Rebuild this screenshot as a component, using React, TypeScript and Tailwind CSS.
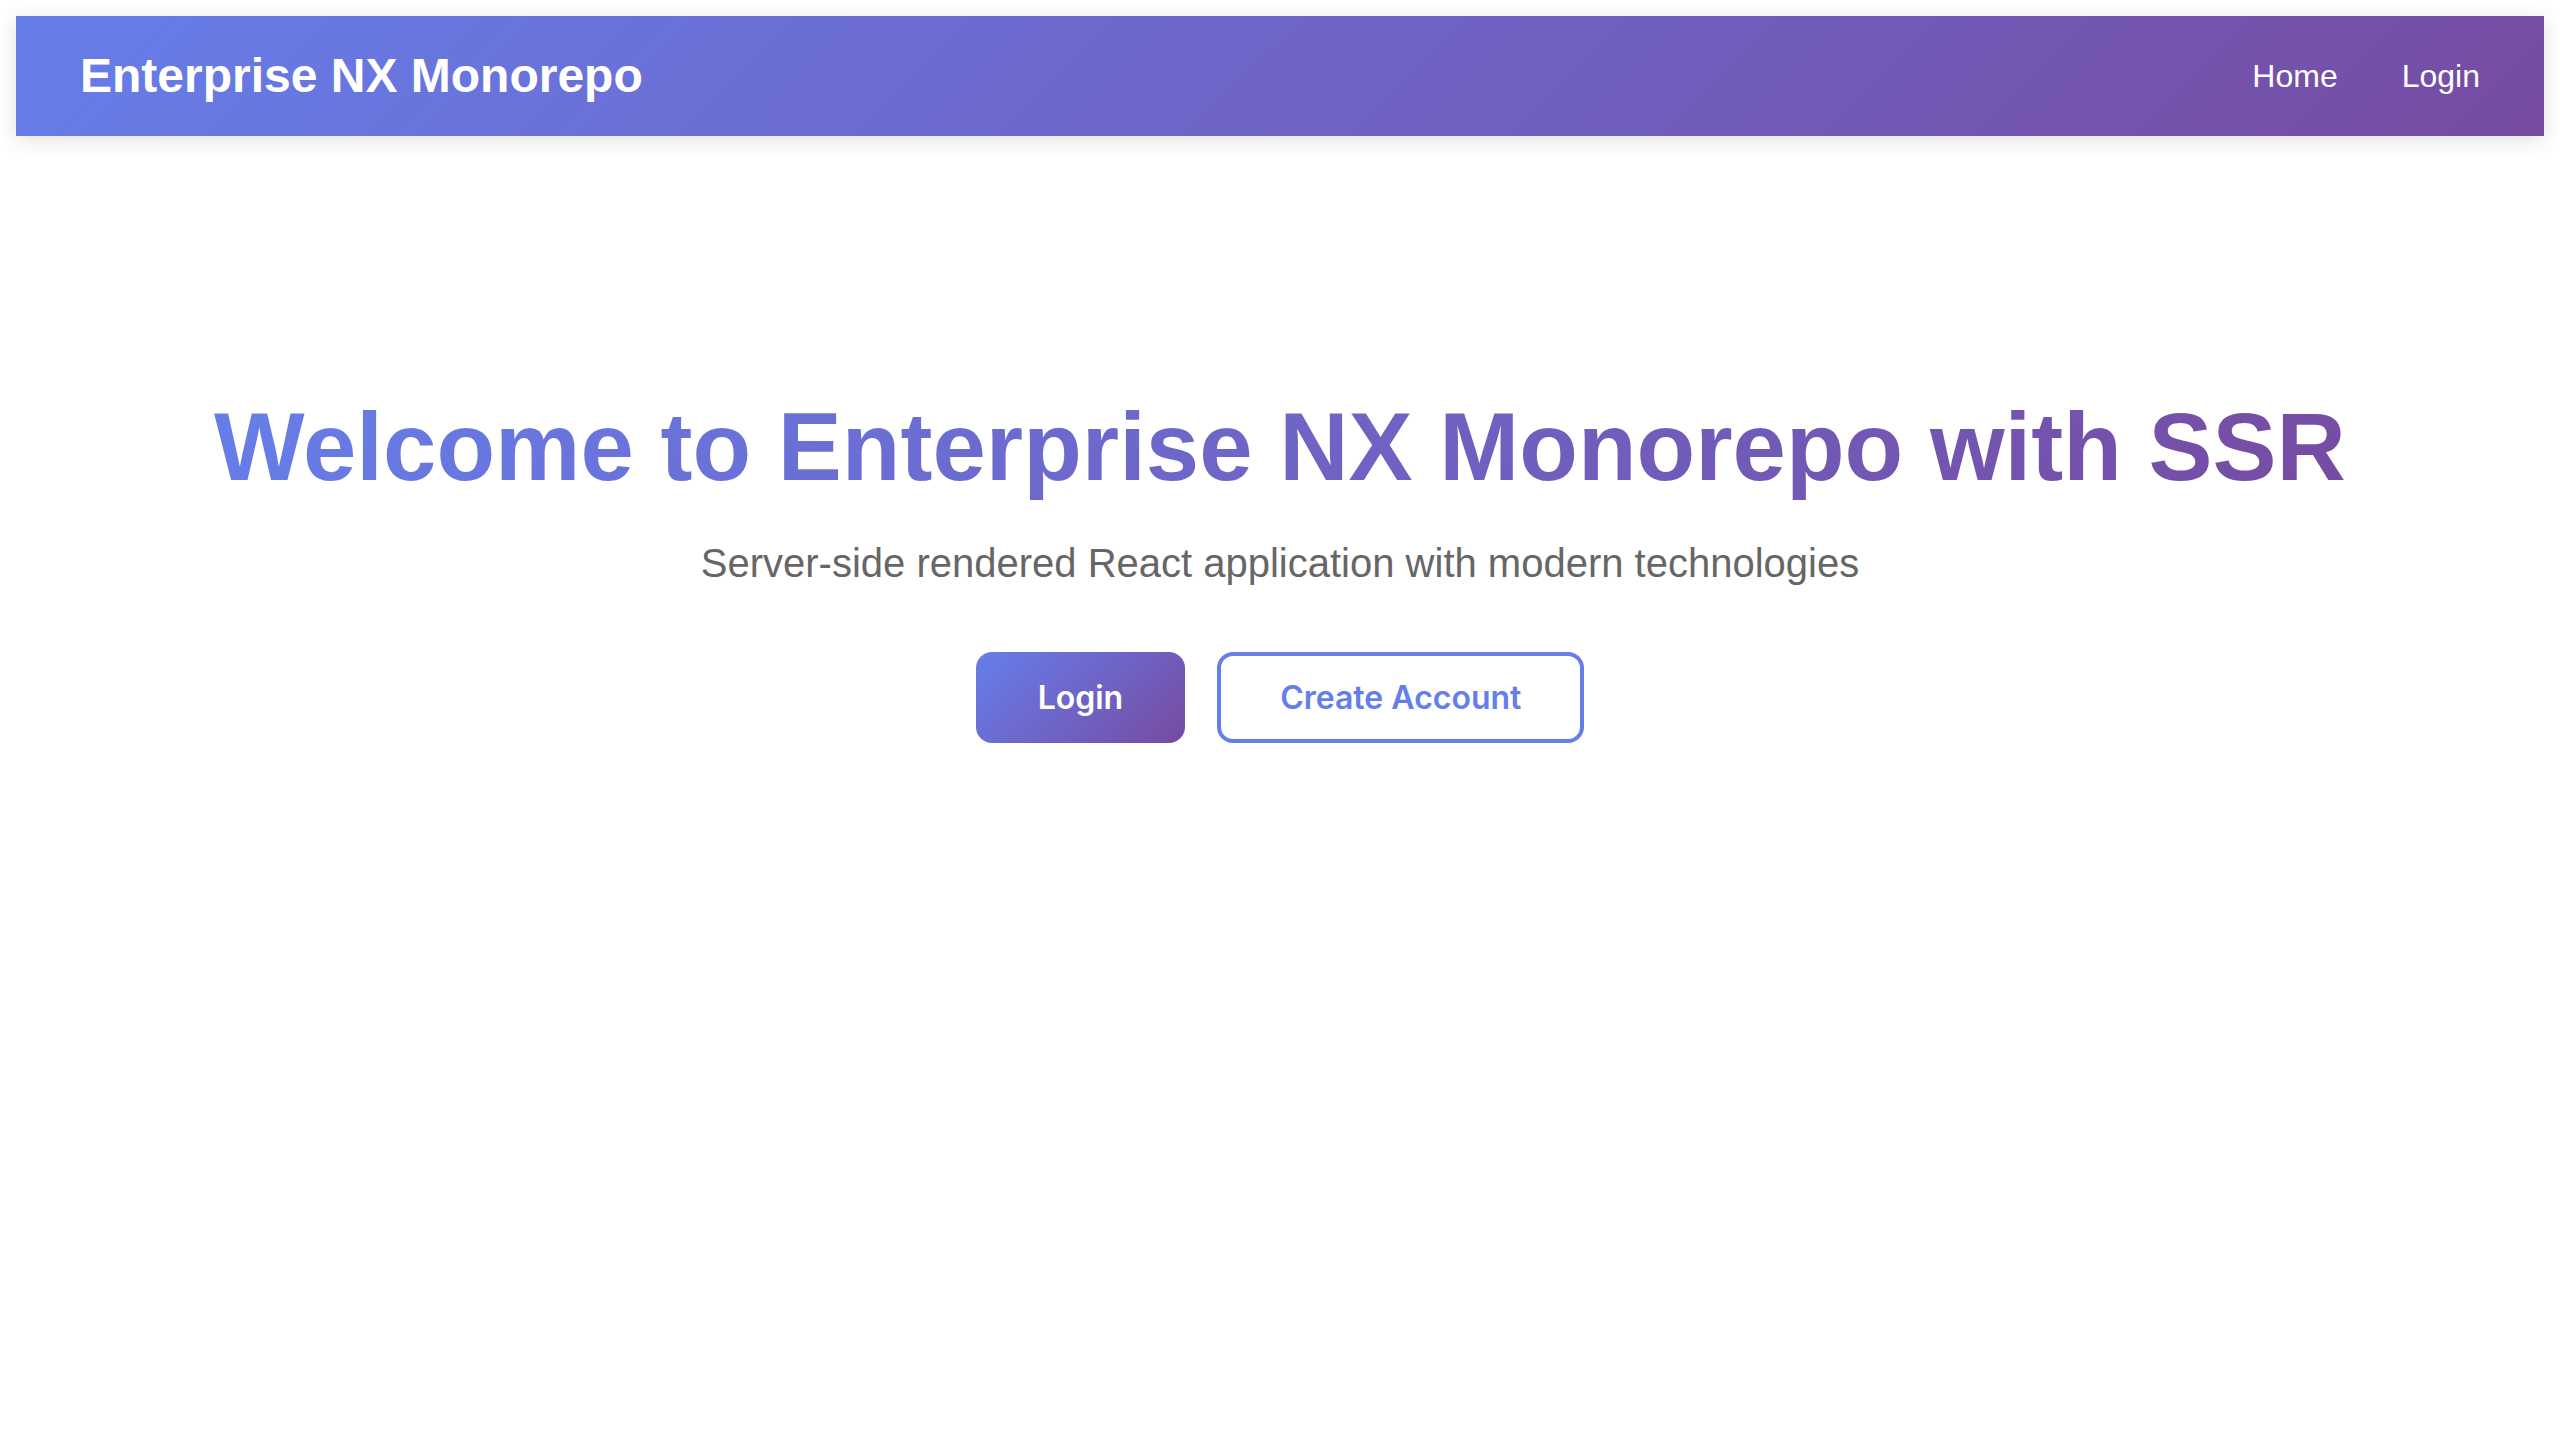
export default function App() {
  const navLinks = [
    { label: "Home", href: "/" },
    { label: "Login", href: "/login" },
  ];

  return (
    <div className="min-h-screen bg-white p-4 font-['Liberation_Sans',Arial,sans-serif]">
      {/* header */}
      <header className="flex h-[120px] items-center justify-between bg-[linear-gradient(135deg,#667eea_0%,#764ba2_100%)] px-16 shadow-[0_4px_20px_rgba(0,0,0,0.12)]">
        <h1 className="text-[48px] font-bold leading-[56px] text-white">Enterprise NX Monorepo</h1>
        <nav className="flex items-center gap-16">
          {navLinks.map((link) => (
            <a key={link.href} href={link.href} className="text-[32px] leading-[40px] text-white">
              {link.label}
            </a>
          ))}
        </nav>
      </header>

      {/* hero */}
      <main className="flex flex-col items-center pt-[253px] text-center">
        <h2 className="inline-block bg-[linear-gradient(135deg,#667eea_0%,#764ba2_100%)] bg-clip-text text-[96px] font-bold leading-[116px] text-transparent">
          Welcome to Enterprise NX Monorepo with SSR
        </h2>
        <p className="mt-[28px] text-[40px] leading-[60px] text-[#666666]">
          Server-side rendered React application with modern technologies
        </p>
        <div className="mt-[59px] flex items-center gap-8 font-['Inter',sans-serif]">
          <button className="flex h-[91px] items-center rounded-2xl bg-[linear-gradient(135deg,#667eea_0%,#764ba2_100%)] px-[62px] text-[32px] font-semibold text-white">
            Login
          </button>
          <button className="flex h-[91px] items-center rounded-2xl border-4 border-[#667eea] bg-white px-[59px] text-[32px] font-semibold text-[#667eea]">
            Create Account
          </button>
        </div>
      </main>
    </div>
  );
}
